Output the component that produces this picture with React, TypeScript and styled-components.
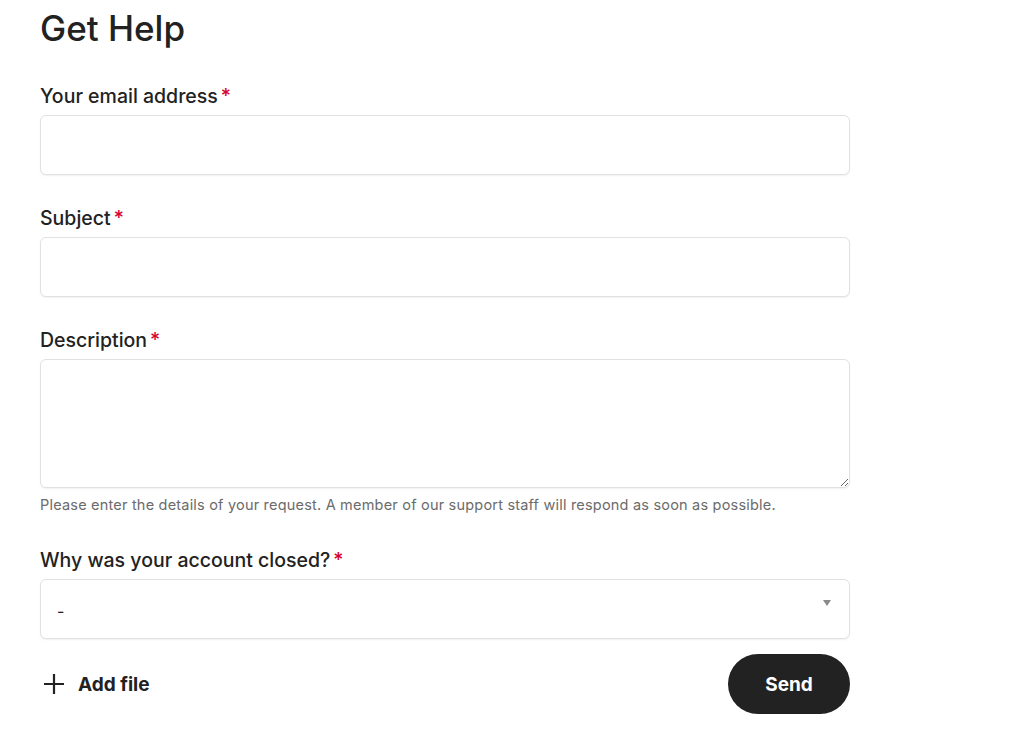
import React from 'react';
import styled, { createGlobalStyle } from 'styled-components';

const GlobalStyle = createGlobalStyle`
  body {
    margin: 0;
    background: #ffffff;
    font-family: Inter, "Noto Sans", Arial, sans-serif;
    color: #222222;
  }
  * { box-sizing: border-box; }
`;

const Page = styled.div`
  width: 810px;
  margin-left: 40px;
  padding-top: 6px;
`;

const Title = styled.h1`
  margin: 0 0 34px;
  font-size: 35px;
  font-weight: 500;
  line-height: 44px;
  color: #222222;
`;

const Field = styled.div`
  margin-bottom: 31px;
  &.with-hint {
    margin-bottom: 34px;
  }
`;

const Label = styled.label`
  display: block;
  font-size: 19.5px;
  font-weight: 500;
  line-height: 24px;
  color: #222222;
  margin-bottom: 7px;
  span {
    color: #d6002e;
    margin-left: 3px;
  }
`;

const boxStyles = `
  display: block;
  width: 100%;
  border: 1px solid #e1e1e1;
  border-radius: 6px;
  background: #ffffff;
  box-shadow: 0 1px 2px rgba(0, 0, 0, 0.06);
  font-family: inherit;
  font-size: 16px;
  color: #222222;
  outline: none;
`;

const Input = styled.input`
  ${boxStyles}
  height: 60px;
  padding: 0 16px;
`;

const TextArea = styled.textarea`
  ${boxStyles}
  height: 129px;
  padding: 12px 16px;
  resize: vertical;
`;

const Hint = styled.p`
  margin: 8px 0 0;
  font-size: 14.5px;
  line-height: 18px;
  color: #6b6b6b;
  letter-spacing: 0.2px;
`;

const SelectWrap = styled.div`
  position: relative;
  &::after {
    content: '';
    position: absolute;
    right: 19px;
    top: 21px;
    border-left: 4px solid transparent;
    border-right: 4px solid transparent;
    border-top: 6px solid #8a8a8a;
    pointer-events: none;
  }
`;

const Select = styled.select`
  ${boxStyles}
  height: 60px;
  padding: 4px 16px 0;
  appearance: none;
`;

const Actions = styled.div`
  display: flex;
  align-items: center;
  justify-content: space-between;
  margin-top: -16px;
`;

const AddFile = styled.button`
  display: flex;
  align-items: center;
  gap: 12px;
  border: none;
  background: none;
  padding: 0;
  margin-left: 2px;
  font-family: inherit;
  font-size: 19px;
  font-weight: 700;
  color: #222222;
  cursor: pointer;
`;

const SendButton = styled.button`
  width: 122px;
  height: 60px;
  border: none;
  border-radius: 30px;
  background: #222222;
  color: #ffffff;
  font-family: inherit;
  font-size: 19px;
  font-weight: 700;
  cursor: pointer;
`;

const PlusIcon = () => (
  <svg width="24" height="24" viewBox="0 0 24 24" fill="none">
    <path d="M12 2v20M2 12h20" stroke="#222222" strokeWidth="2.2" />
  </svg>
);

export default function App() {
  return (
    <>
      <GlobalStyle />
      <Page>
        <Title>Get Help</Title>
        <Field>
          <Label>
            Your email address<span>*</span>
          </Label>
          <Input type="email" />
        </Field>
        <Field>
          <Label>
            Subject<span>*</span>
          </Label>
          <Input type="text" />
        </Field>
        <Field className="with-hint">
          <Label>
            Description<span>*</span>
          </Label>
          <TextArea />
          <Hint>
            Please enter the details of your request. A member of our support staff will respond as soon as possible.
          </Hint>
        </Field>
        <Field>
          <Label>
            Why was your account closed?<span>*</span>
          </Label>
          <SelectWrap>
            <Select defaultValue="-">
              <option value="-">-</option>
            </Select>
          </SelectWrap>
        </Field>
        <Actions>
          <AddFile type="button">
            <PlusIcon />
            Add file
          </AddFile>
          <SendButton type="button">Send</SendButton>
        </Actions>
      </Page>
    </>
  );
}
